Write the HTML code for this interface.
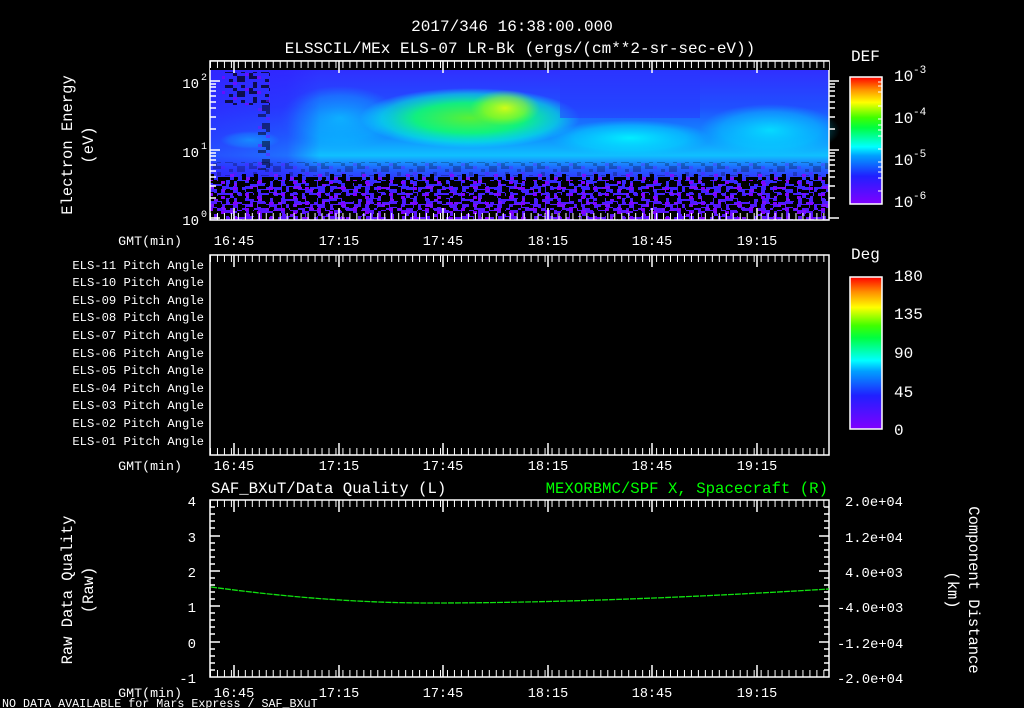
<!DOCTYPE html>
<html><head><meta charset="utf-8"><style>
html,body{margin:0;padding:0;background:#000;width:1024px;height:708px;overflow:hidden}
svg{display:block}
text{font-family:"Liberation Mono",monospace;fill:#fff}
</style></head><body>
<svg width="1024" height="708" viewBox="0 0 1024 708" xmlns="http://www.w3.org/2000/svg">
<defs>
<linearGradient id="cb" x1="0" y1="1" x2="0" y2="0">
<stop offset="0" stop-color="#8000ff"/><stop offset="0.22" stop-color="#2020ff"/>
<stop offset="0.38" stop-color="#00a0ff"/><stop offset="0.45" stop-color="#00ffff"/>
<stop offset="0.6" stop-color="#00ff40"/><stop offset="0.68" stop-color="#40ff00"/>
<stop offset="0.8" stop-color="#ffff00"/><stop offset="0.9" stop-color="#ff9000"/>
<stop offset="1" stop-color="#ff0000"/></linearGradient>
<linearGradient id="vbase" x1="0" y1="0" x2="0" y2="1">
<stop offset="0" stop-color="#3030ff"/><stop offset="0.25" stop-color="#2050ff"/>
<stop offset="0.45" stop-color="#1090ff"/><stop offset="0.57" stop-color="#10c0ff"/>
<stop offset="0.66" stop-color="#2060ff"/><stop offset="0.75" stop-color="#3828ff"/><stop offset="1" stop-color="#6010ff"/></linearGradient>
<linearGradient id="lft" x1="0" y1="0" x2="1" y2="0">
<stop offset="0" stop-color="#3020ff" stop-opacity="0.7"/><stop offset="0.7" stop-color="#3020ff" stop-opacity="0.5"/><stop offset="1" stop-color="#3020ff" stop-opacity="0"/></linearGradient>
<radialGradient id="green" cx="0.5" cy="0.5" r="0.5">
<stop offset="0" stop-color="#60ff20"/><stop offset="0.5" stop-color="#10ff70"/>
<stop offset="0.8" stop-color="#00ffd0" stop-opacity="0.6"/><stop offset="1" stop-color="#00ffff" stop-opacity="0"/></radialGradient>
<radialGradient id="yel" cx="0.5" cy="0.5" r="0.5">
<stop offset="0" stop-color="#ffff00"/><stop offset="0.6" stop-color="#c0ff00" stop-opacity="0.6"/><stop offset="1" stop-color="#80ff20" stop-opacity="0"/></radialGradient>
<radialGradient id="cyan" cx="0.5" cy="0.5" r="0.5">
<stop offset="0" stop-color="#00f8ff"/><stop offset="0.7" stop-color="#00e0ff" stop-opacity="0.5"/><stop offset="1" stop-color="#00d0ff" stop-opacity="0"/></radialGradient>
<pattern id="pA" x="210" y="0" width="44" height="18" patternUnits="userSpaceOnUse">
<g fill="#000"><rect x="0" y="0" width="4" height="3"/><rect x="8" y="0" width="8" height="3"/><rect x="20" y="0" width="4" height="6"/><rect x="32" y="3" width="8" height="3"/>
<rect x="4" y="6" width="8" height="3"/><rect x="16" y="9" width="4" height="3"/><rect x="28" y="6" width="4" height="6"/><rect x="36" y="9" width="8" height="3"/>
<rect x="0" y="12" width="4" height="6"/><rect x="8" y="15" width="12" height="3"/><rect x="24" y="15" width="4" height="3"/><rect x="32" y="12" width="4" height="6"/><rect x="40" y="15" width="4" height="3"/><rect x="12" y="3" width="4" height="3"/></g>
<g fill="#7a10ff"><rect x="4" y="0" width="4" height="3"/><rect x="24" y="3" width="4" height="3"/><rect x="12" y="9" width="4" height="3"/><rect x="40" y="6" width="4" height="3"/><rect x="20" y="12" width="4" height="3"/><rect x="36" y="15" width="4" height="3"/><rect x="0" y="6" width="4" height="3"/></g>
</pattern>
<pattern id="pB" x="213" y="1" width="36" height="15" patternUnits="userSpaceOnUse">
<g fill="#000"><rect x="0" y="0" width="8" height="3"/><rect x="16" y="3" width="4" height="3"/><rect x="24" y="0" width="8" height="6"/><rect x="4" y="6" width="4" height="6"/><rect x="12" y="9" width="8" height="3"/><rect x="28" y="9" width="4" height="3"/><rect x="20" y="12" width="4" height="3"/><rect x="0" y="12" width="4" height="3"/></g>
<g fill="#8000ff"><rect x="8" y="0" width="4" height="3"/><rect x="20" y="6" width="4" height="3"/><rect x="32" y="12" width="4" height="3"/></g>
</pattern>
<pattern id="tk" x="210" y="0" width="6.97" height="10" patternUnits="userSpaceOnUse"><rect x="0" width="1" height="10" fill="#fff"/></pattern>
</defs>

<text x="512" y="31" font-size="16" text-anchor="middle">2017/346 16:38:00.000</text>
<text x="520" y="53" font-size="16" text-anchor="middle">ELSSCIL/MEx ELS-07 LR-Bk  (ergs/(cm**2-sr-sec-eV))</text>

<rect x="210" y="70" width="619" height="150" fill="url(#vbase)"/>
<ellipse cx="470" cy="118" rx="110" ry="30" fill="url(#green)" opacity="0.9"/>
<ellipse cx="505" cy="108" rx="35" ry="18" fill="url(#yel)" opacity="0.8"/>
<ellipse cx="340" cy="118" rx="60" ry="32" fill="url(#cyan)" opacity="0.5"/>
<rect x="560" y="70" width="140" height="48" fill="#2838ff" opacity="0.5"/>
<ellipse cx="630" cy="138" rx="80" ry="18" fill="url(#cyan)" opacity="0.9"/>
<ellipse cx="770" cy="130" rx="70" ry="26" fill="url(#cyan)" opacity="0.75"/>
<rect x="210" y="70" width="110" height="110" fill="url(#lft)"/>
<ellipse cx="250" cy="140" rx="30" ry="9" fill="url(#cyan)" opacity="0.35"/>
<rect x="222" y="72" width="48" height="33" fill="url(#pB)" opacity="0.7"/>
<rect x="258" y="100" width="12" height="70" fill="url(#pA)" opacity="0.5"/>
<rect x="210" y="162" width="619" height="14" fill="url(#pB)" opacity="0.25"/>
<rect x="210" y="174" width="619" height="46" fill="url(#pA)"/>
<rect x="210" y="180" width="619" height="40" fill="url(#pB)"/>
<g fill="none" stroke="#fff" stroke-width="1.5">
<rect x="210" y="61" width="619" height="159"/>
<rect x="210" y="255" width="619" height="200"/>
<rect x="210" y="500" width="619" height="177"/>
</g>
<rect x="210" y="61" width="619" height="9" fill="#000"/>
<rect x="210" y="61" width="619" height="7" fill="url(#tk)"/>
<rect x="210" y="213" width="619" height="7" fill="url(#tk)"/>
<rect x="210" y="255" width="619" height="7" fill="url(#tk)"/>
<rect x="210" y="448" width="619" height="7" fill="url(#tk)"/>
<rect x="210" y="500" width="619" height="7" fill="url(#tk)"/>
<rect x="210" y="670" width="619" height="7" fill="url(#tk)"/>
<g stroke="#fff" stroke-width="1.5">
<path d="M210 61h619"/>
<path d="M234 61v12M339 61v12M443 61v12M548 61v12M652 61v12M757 61v12M234 220v-12M339 220v-12M443 220v-12M548 220v-12M652 220v-12M757 220v-12"/>
<path d="M234 255v12M339 255v12M443 255v12M548 255v12M652 255v12M757 255v12M234 455v-12M339 455v-12M443 455v-12M548 455v-12M652 455v-12M757 455v-12"/>
<path d="M234 500v12M339 500v12M443 500v12M548 500v12M652 500v12M757 500v12M234 677v-12M339 677v-12M443 677v-12M548 677v-12M652 677v-12M757 677v-12"/>
<path d="M210 81h10M210 150h10M210 218h10M210 129h6M210 117h6M210 108h6M210 102h6M210 96h6M210 91h6M210 87h6M210 84h6M210 198h6M210 186h6M210 177h6M210 171h6M210 165h6M210 160h6M210 156h6M210 153h6"/>
<path d="M829 81h10M829 150h10M829 218h10M829 129h6M829 117h6M829 108h6M829 102h6M829 96h6M829 91h6M829 87h6M829 84h6M829 198h6M829 186h6M829 177h6M829 171h6M829 165h6M829 160h6M829 156h6M829 153h6"/>
<path d="M210 536h10M210 571h10M210 606h10M210 642h10M829 536h-10M829 571h-10M829 606h-10M829 642h-10"/>
<path d="M210 507h5M210 514h5M210 521h5M210 528h5M210 543h5M210 550h5M210 557h5M210 564h5M210 578h5M210 585h5M210 592h5M210 599h5M210 613h5M210 620h5M210 627h5M210 634h5M210 649h5M210 656h5M210 663h5M210 670h5"/>
<path d="M829 507h-5M829 514h-5M829 521h-5M829 528h-5M829 543h-5M829 550h-5M829 557h-5M829 564h-5M829 578h-5M829 585h-5M829 592h-5M829 599h-5M829 613h-5M829 620h-5M829 627h-5M829 634h-5M829 649h-5M829 656h-5M829 663h-5M829 670h-5"/>
</g>

<g font-size="14" text-anchor="end">
<text x="199" y="88">10</text><text x="207" y="80" font-size="10">2</text>
<text x="199" y="157">10</text><text x="207" y="149" font-size="10">1</text>
<text x="199" y="225">10</text><text x="207" y="217" font-size="10">0</text>
</g>
<text transform="translate(72,145) rotate(-90)" font-size="15.5" text-anchor="middle">Electron Energy</text>
<text transform="translate(93,145) rotate(-90)" font-size="15.5" text-anchor="middle">(eV)</text>

<g font-size="13.5" text-anchor="middle">
<text x="234" y="245">16:45</text><text x="339" y="245">17:15</text><text x="443" y="245">17:45</text><text x="548" y="245">18:15</text><text x="652" y="245">18:45</text><text x="757" y="245">19:15</text>
<text x="234" y="470">16:45</text><text x="339" y="470">17:15</text><text x="443" y="470">17:45</text><text x="548" y="470">18:15</text><text x="652" y="470">18:45</text><text x="757" y="470">19:15</text>
<text x="234" y="697">16:45</text><text x="339" y="697">17:15</text><text x="443" y="697">17:45</text><text x="548" y="697">18:15</text><text x="652" y="697">18:45</text><text x="757" y="697">19:15</text>
</g>
<g font-size="13.3" text-anchor="end">
<text x="182" y="245">GMT(min)</text><text x="182" y="470">GMT(min)</text><text x="182" y="697">GMT(min)</text>
</g>

<text x="851" y="61" font-size="16">DEF</text>
<rect x="850" y="77" width="32" height="127" fill="url(#cb)" stroke="#fff" stroke-width="1.5"/>
<g stroke="#fff" stroke-width="1"><path d="M882 82h-4M882 86h-4M882 92h-4M882 106h-4M882 119h-4M882 125h-4M882 130h-4M882 136h-4M882 149h-4M882 162h-4M882 167h-4M882 172h-4M882 178h-4M882 191h-4"/></g>
<g font-size="16"><text x="894" y="81">10</text><text x="913" y="73" font-size="11">-3</text>
<text x="894" y="123">10</text><text x="913" y="115" font-size="11">-4</text>
<text x="894" y="165">10</text><text x="913" y="157" font-size="11">-5</text>
<text x="894" y="207">10</text><text x="913" y="199" font-size="11">-6</text></g>

<g font-size="12.2" text-anchor="end">
<text x="204" y="269">ELS-11 Pitch Angle</text><text x="204" y="286">ELS-10 Pitch Angle</text>
<text x="204" y="304">ELS-09 Pitch Angle</text><text x="204" y="321">ELS-08 Pitch Angle</text>
<text x="204" y="339">ELS-07 Pitch Angle</text><text x="204" y="357">ELS-06 Pitch Angle</text>
<text x="204" y="374">ELS-05 Pitch Angle</text><text x="204" y="392">ELS-04 Pitch Angle</text>
<text x="204" y="409">ELS-03 Pitch Angle</text><text x="204" y="427">ELS-02 Pitch Angle</text>
<text x="204" y="445">ELS-01 Pitch Angle</text>
</g>
<text x="851" y="259" font-size="16">Deg</text>
<rect x="850" y="277" width="32" height="152" fill="url(#cb)" stroke="#fff" stroke-width="1.5"/>
<g font-size="16"><text x="894" y="281">180</text><text x="894" y="319">135</text><text x="894" y="358">90</text><text x="894" y="397">45</text><text x="894" y="435">0</text></g>

<text x="211" y="493" font-size="15.7">SAF_BXuT/Data Quality (L)</text>
<text x="828" y="493" font-size="15.7" text-anchor="end" style="fill:#00ff00">MEXORBMC/SPF X, Spacecraft (R)</text>
<path d="M211 587 Q330 603 430 603 Q600 603 829 589" fill="none" stroke="#10e010" stroke-width="1.3" stroke-dasharray="6 1"/>
<g font-size="14" text-anchor="end">
<text x="196" y="506">4</text><text x="196" y="542">3</text><text x="196" y="577">2</text><text x="196" y="612">1</text><text x="196" y="648">0</text><text x="196" y="683">-1</text>
</g>
<g font-size="13.8">
<text x="845" y="506">2.0e+04</text><text x="845" y="542">1.2e+04</text><text x="845" y="577">4.0e+03</text><text x="837" y="612">-4.0e+03</text><text x="837" y="648">-1.2e+04</text><text x="837" y="683">-2.0e+04</text>
</g>
<text transform="translate(72,590) rotate(-90)" font-size="15.5" text-anchor="middle">Raw Data Quality</text>
<text transform="translate(93,590) rotate(-90)" font-size="15.5" text-anchor="middle">(Raw)</text>
<text transform="translate(969,590) rotate(90)" font-size="15.5" text-anchor="middle">Component Distance</text>
<text transform="translate(948,590) rotate(90)" font-size="15.5" text-anchor="middle">(km)</text>
<text x="2" y="707" font-size="11.7">NO DATA AVAILABLE for Mars  Express / SAF_BXuT</text>
</svg>
</body></html>
